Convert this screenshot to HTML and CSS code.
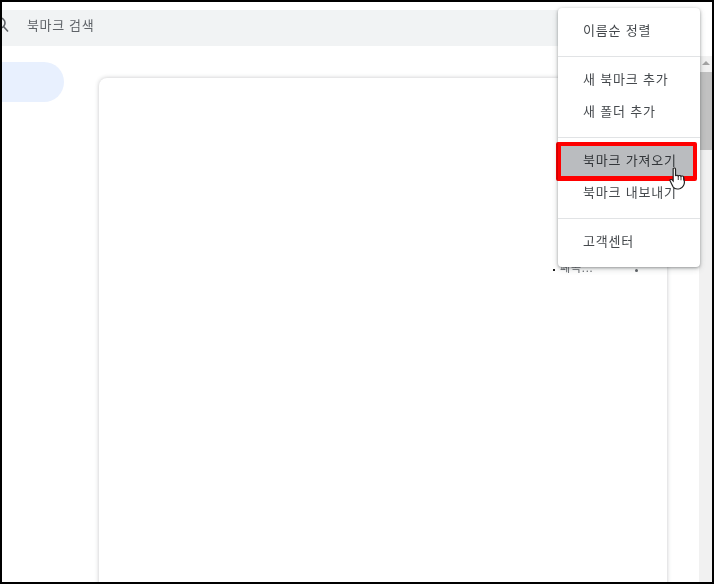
FILE: index.html
```html
<!DOCTYPE html>
<html lang="ko">
<head>
<meta charset="utf-8">
<title>북마크</title>
<link rel="stylesheet" href="styles.css">
</head>
<body>
<div class="frame">
  <div class="page">
    <header class="topbar">
      <div class="search">
        <svg class="search-icon" width="20" height="20" viewBox="0 0 20 20"><circle cx="7" cy="9" r="5" fill="none" stroke="#5f6368" stroke-width="1.6"/><path d="M10.500 12.500l4.500 5" stroke="#5f6368" stroke-width="1.6" fill="none"/></svg>
        <span class="search-text">북마크 검색</span>
      </div>
    </header>
    <div class="content">
      <aside class="side"><div class="pill"></div></aside>
      <main class="card">
        <div class="row"><span class="row-mark"></span><span class="row-text">폐곡...</span><span class="row-dot"></span></div>
      </main>
      <div class="scrollbar">
        <div class="arrow"></div>
        <div class="thumb"></div>
      </div>
    </div>
  </div>

  <nav class="menu">
    <section class="group first"><div class="item">이름순 정렬</div></section>
    <section class="group double"><div class="item">새 북마크 추가</div><div class="item">새 폴더 추가</div></section>
    <section class="group double"><div class="item">북마크 가져오기</div><div class="item">북마크 내보내기</div></section>
    <section class="group last"><div class="item">고객센터</div></section>
  </nav>

  <div class="highlight"></div>
  <svg class="hand" width="19" height="25" viewBox="0 0 16 25" preserveAspectRatio="none"><path d="M3.500 1.500c1 -1 2 -.5 2 1v6.500c.5-1 2-1 2.300 0 .5-.8 2-.8 2.300.3.600-.6 2-.4 2.200.7l.7 5c0 3-1 5-3.500 6.500-2.500 1-5 .3-6-1.500L1 14c-.6-1 .4-2 1.500-1.300L3.500 14z" fill="#fff" stroke="#222" stroke-width="1"/><path d="M7.800 9v4M10.100 9.300v4M12.300 10v3.500" stroke="#222" stroke-width=".8" fill="none"/></svg>
</div>
</body>
</html>
```
FILE: styles.css
```css
* { box-sizing: border-box; }
html, body { margin: 0; padding: 0; }
body { width: 714px; height: 584px; overflow: hidden; background: #fff; font-family: "Noto Sans CJK KR", "Noto Sans", sans-serif; }
.frame { position: relative; width: 714px; height: 584px; border: 2px solid #000; overflow: hidden; background: #fff; }
.page { height: 100%; display: flex; flex-direction: column; padding-top: 8px; }
.topbar { height: 36px; flex: none; padding-right: 60px; }
.search { height: 36px; padding-bottom: 8px; background: #f1f3f4; display: flex; align-items: center; border-radius: 0 8px 8px 0; }
.search-icon { margin-left: -9px; flex: none; }
.search-text { margin-left: 14px; font-size: 13px; letter-spacing: .65px; color: #5f6368; }
.content { flex: 1; display: flex; align-items: stretch; min-height: 0; }
.side { width: 97px; flex: none; padding-top: 16px; }
.pill { width: 62px; height: 40px; background: #e8f0fe; border-radius: 0 20px 20px 0; }
.card { width: 568px; flex: none; margin-top: 32px; margin-bottom: -12px; background: #fff; border-radius: 8px 8px 0 0; box-shadow: 0 0 4px rgba(60,64,67,.3); padding: 182px 0 0 454px; }
.row { display: flex; align-items: center; font-size: 11px; color: #5f6368; height: 14px; }
.row-mark { width: 2px; height: 2px; background: #222; flex: none; margin-top: 5px; }
.row-text { width: 80px; padding-left: 5px; line-height: 14px; letter-spacing: .8px; white-space: nowrap; }
.row-dot { width: 3px; height: 3px; margin-top: 6px; border-radius: 50%; background: #5f6368; box-shadow: 0 -5px 0 #5f6368, 0 -10px 0 #5f6368; }
.scrollbar { width: 13px; flex: none; margin-left: 32px; margin-top: 10px; background: #f1f1f1; display: flex; flex-direction: column; align-items: center; }
.arrow { width: 0; height: 0; margin-top: 5px; border: 4px solid transparent; border-top-width: 0; border-bottom: 4px solid #a3a3a3; flex: none; }
.thumb { width: 100%; height: 78px; margin-top: 7px; background: #c1c1c1; flex: none; }
.menu { position: absolute; left: 556px; top: 6px; width: 142px; height: 259px; background: #fff; border-radius: 4px; box-shadow: 0 1px 3px rgba(60,64,67,.45), 0 2px 6px rgba(60,64,67,.2); display: flex; flex-direction: column; }
.group { border-top: 1px solid #e1e3e5; padding: 6px 0 0; flex: none; }
.group.first { border-top: 0; height: 48px; }
.group.double { height: 81px; }
.group.last { flex: 1; }
.item { height: 32px; padding-left: 25px; font-size: 13px; letter-spacing: .8px; line-height: 31px; color: #45494d; white-space: nowrap; }
.highlight { position: absolute; left: 554px; top: 140px; width: 141px; height: 39px; border: solid #f00; border-width: 4px 4px 5px 5px; border-radius: 2px; background: rgba(117,122,128,.5); mix-blend-mode: multiply; }
.hand { position: absolute; left: 667px; top: 165px; }
```
